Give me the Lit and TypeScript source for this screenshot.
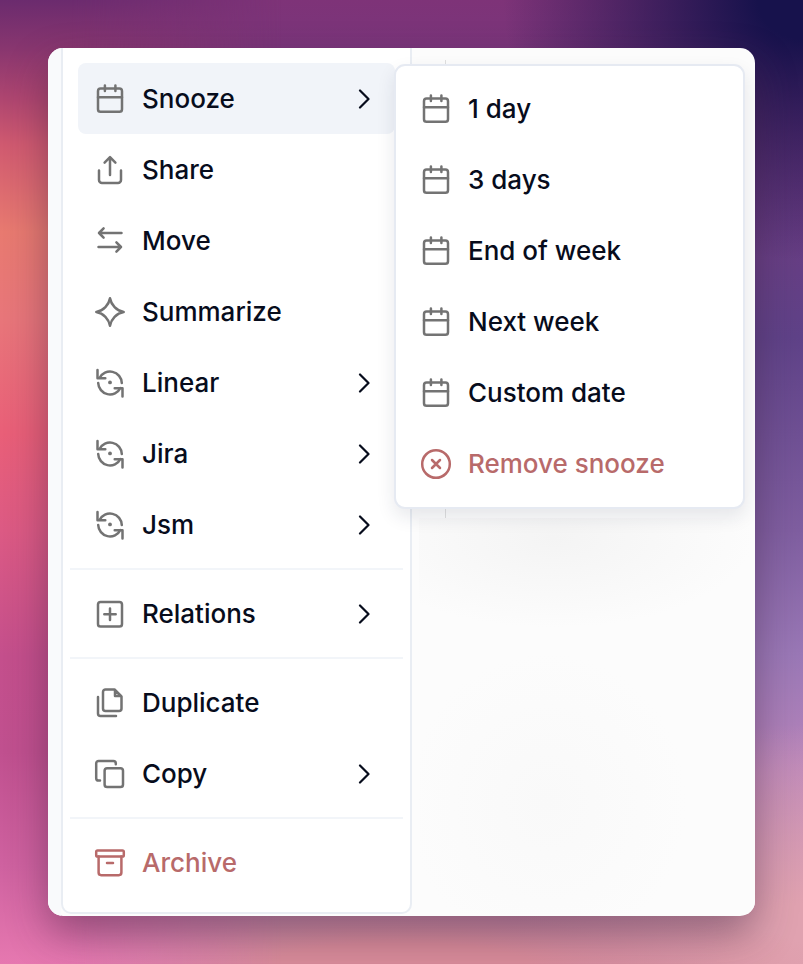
import { LitElement, html, css, svg } from 'lit';
import { customElement } from 'lit/decorators.js';

const calendar = svg`<rect x="2" y="3.6" width="24" height="23.2" rx="2.6"/><path d="M2 12.2H26M8.9 0.6V6M19.4 0.6V6"/>`;
const icons: Record<string, unknown> = {
  calendar,
  share: svg`<path d="M14 19V1.5M8.6 6.6L14 1.2L19.4 6.6M3 14.5V24A3 3 0 0 0 6 27H22A3 3 0 0 0 25 24V14.5"/>`,
  move: svg`<path d="M25.5 6H3M7.6 1.4L3 6L7.6 10.6M2.5 20H25M20.4 15.4L25 20L20.4 24.6"/>`,
  spark: svg`<path d="M14 0.3C15.2 7 20.5 12.8 27.7 14C20.5 15.2 15.2 21 14 27.7C12.8 21 7.5 15.2 0.3 14C7.5 12.8 12.8 7 14 0.3Z"/>`,
  sync: svg`<path d="M3.5 9A11.8 11.8 0 0 1 25.8 14M1.5 1V9.3H9.3M24.5 19A11.8 11.8 0 0 1 2.2 14M26.5 27.5V19.3H18.7"/><circle cx="14" cy="13.4" r="1.9" fill="currentColor" stroke="none"/>`,
  plus: svg`<rect x="2" y="2" width="24" height="24.6" rx="2.6"/><path d="M14 8.6V20M8.3 14.3H19.7"/>`,
  duplicate: svg`<path d="M9.5 0.5H18.5L25.5 7.5V19.5A2.5 2.5 0 0 1 23 22H9.5A2.5 2.5 0 0 1 7 19.5V3A2.5 2.5 0 0 1 9.5 0.5ZM19 1V7H25M2 8V24.5A2.5 2.5 0 0 0 4.5 27H20"/>`,
  copy: svg`<rect x="8.6" y="8.2" width="18.4" height="18.8" rx="2.6"/><path d="M4 20.6H2.6A2.4 2.4 0 0 1 0.2 18.2V3.4A2.4 2.4 0 0 1 2.6 1H17.4A2.4 2.4 0 0 1 19.8 3.4V4.2"/>`,
  archive: svg`<rect x="0.2" y="1.4" width="27.6" height="6.2" rx="1.4"/><path d="M2.6 7.6V23.6A2.6 2.6 0 0 0 5.2 26.2H22.8A2.6 2.6 0 0 0 25.4 23.6V7.6M11 14H17"/>`,
  remove: svg`<circle cx="14" cy="14" r="13.8"/><path d="M10 10L18 18M18 10L10 18"/>`,
};

interface Item {
  label: string;
  icon: string;
  more?: boolean;
  active?: boolean;
  danger?: boolean;
}

const mainGroups: Item[][] = [
  [
    { label: 'Snooze', icon: 'calendar', more: true, active: true },
    { label: 'Share', icon: 'share' },
    { label: 'Move', icon: 'move' },
    { label: 'Summarize', icon: 'spark' },
    { label: 'Linear', icon: 'sync', more: true },
    { label: 'Jira', icon: 'sync', more: true },
    { label: 'Jsm', icon: 'sync', more: true },
  ],
  [{ label: 'Relations', icon: 'plus', more: true }],
  [
    { label: 'Duplicate', icon: 'duplicate' },
    { label: 'Copy', icon: 'copy', more: true },
  ],
  [{ label: 'Archive', icon: 'archive', danger: true }],
];

const snoozeItems: Item[] = [
  { label: '1 day', icon: 'calendar' },
  { label: '3 days', icon: 'calendar' },
  { label: 'End of week', icon: 'calendar' },
  { label: 'Next week', icon: 'calendar' },
  { label: 'Custom date', icon: 'calendar' },
  { label: 'Remove snooze', icon: 'remove', danger: true },
];

@customElement('app-root')
export class AppRoot extends LitElement {
  static styles = css`
    :host {
      display: block;
      position: relative;
      height: 964px;
      box-sizing: border-box;
      padding: 48px;
      overflow: hidden;
      font-family: Inter, 'Liberation Sans', sans-serif;
      background:
        radial-gradient(ellipse 300px 260px at 100% 0, #17124c 15%, rgba(23, 18, 76, 0) 100%),
        radial-gradient(ellipse 420px 70px at 50% 964px, #d98c9a 30%, rgba(217, 140, 154, 0) 100%),
        radial-gradient(ellipse 300px 240px at 100% 964px, #e0a2b0 25%, rgba(224, 162, 176, 0) 100%),
        linear-gradient(180deg, #7e3378 0, #5f4288 35%, #7f5ea0 55%, #9a78b6 68%, #b885bb 80%, #c78fb0 100%);
    }

    :host::before {
      content: '';
      position: absolute;
      inset: 0 65% 0 0;
      background: linear-gradient(
        180deg,
        #6b2b6e 0,
        #88366f 5%,
        #ad4570 10%,
        #d05a70 15%,
        #e87a70 24%,
        #e8767a 33%,
        #e95f78 45%,
        #dc5a84 55%,
        #c44f8c 68%,
        #c0508f 78%,
        #cf62a0 90%,
        #e678b0 100%
      );
      mask-image: linear-gradient(90deg, #000 25%, transparent);
    }

    .window {
      position: relative;
      display: flex;
      width: 707px;
      height: 868px;
      border-radius: 15px;
      overflow: hidden;
      background: #fcfcfc;
      box-shadow: 0 18px 40px rgba(60, 30, 60, 0.45);
    }

    .rail {
      width: 13px;
      flex: none;
      background: #f9fafc;
    }

    .menu {
      box-sizing: border-box;
      width: 351px;
      height: 866px;
      padding: 15px 15px 0 15px;
      flex: none;
      background: #fff;
      border: 2px solid #e9edf3;
      border-top: none;
      border-radius: 0 0 10px 10px;
    }

    .divider {
      height: 2px;
      margin: 8px -8px;
      background: #f2f5f9;
    }

    .pane {
      flex: 1;
      display: flex;
      padding: 470px 0 2px 7px;
    }

    .pane-body {
      flex: 1;
      background:
        radial-gradient(ellipse 200px 90px at 40% 5%, #f4f4f4, rgba(244, 244, 244, 0)),
        radial-gradient(ellipse 140px 150px at 38% 72%, #f9f9f9, rgba(249, 249, 249, 0)),
        #fcfcfc;
    }

    .tick {
      position: absolute;
      left: 397px;
      top: 12px;
      width: 1px;
      height: 458px;
      background: #dfdfdf;
    }

    .submenu {
      position: absolute;
      left: 346px;
      top: 16px;
      box-sizing: border-box;
      width: 351px;
      height: 445px;
      padding: 7px 15px 6px 16px;
      background: #fff;
      border: 2px solid #e6eaf2;
      border-radius: 11px;
      box-shadow: 0 8px 18px rgba(30, 40, 70, 0.1);
    }

    .row {
      display: flex;
      align-items: center;
      height: 71px;
      padding: 0 18px;
      gap: 18px;
      border-radius: 8px;
      font-size: 26px;
      font-weight: 500;
      color: #070c1c;
    }

    .submenu .row {
      padding: 0 10px;
    }

    .row.active {
      background: #f1f4f9;
    }

    .row.danger {
      color: #b86a6a;
    }

    .label {
      flex: 1;
    }

    .icon {
      width: 28px;
      height: 28px;
      flex: none;
      overflow: visible;
      fill: none;
      stroke: #737373;
      stroke-width: 2.5;
      stroke-linecap: round;
      stroke-linejoin: round;
      color: #737373;
    }

    .danger .icon {
      stroke: #b86a6a;
      color: #b86a6a;
    }

    .chevron {
      width: 12px;
      height: 20px;
      flex: none;
      margin-right: 7px;
      fill: none;
      stroke: #070c1c;
      stroke-width: 2.2;
      stroke-linecap: round;
      stroke-linejoin: round;
    }
  `;

  private renderRow(item: Item) {
    const cls = `row${item.active ? ' active' : ''}${item.danger ? ' danger' : ''}`;
    return html`
      <div class=${cls}>
        <svg class="icon" viewBox="0 0 28 28">${icons[item.icon]}</svg>
        <span class="label">${item.label}</span>
        ${item.more
          ? html`<svg class="chevron" viewBox="0 0 12 20"><path d="M2 1.5L10.5 10L2 18.5" /></svg>`
          : ''}
      </div>
    `;
  }

  render() {
    return html`
      <div class="window">
        <div class="rail"></div>
        <div class="menu">
          ${mainGroups.map(
            (group, i) => html`
              ${i > 0 ? html`<div class="divider"></div>` : ''}
              ${group.map((item) => this.renderRow(item))}
            `
          )}
        </div>
        <div class="pane"><div class="pane-body"></div></div>
        <div class="tick"></div>
        <div class="submenu">${snoozeItems.map((item) => this.renderRow(item))}</div>
      </div>
    `;
  }
}
